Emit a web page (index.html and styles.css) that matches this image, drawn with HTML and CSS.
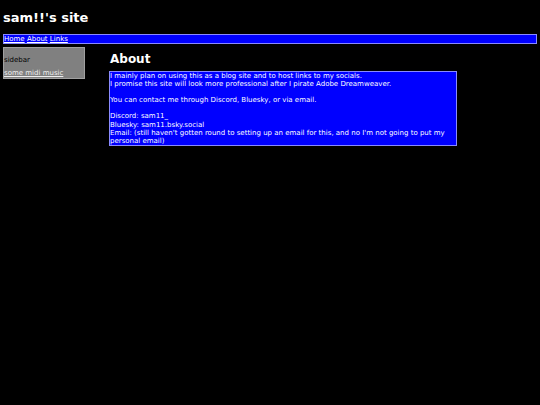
FILE: index.html
```html
<!DOCTYPE html>
<html>
<head>
<meta charset="utf-8">
<title>sam!!'s site</title>
<link rel="stylesheet" href="styles.css">
</head>
<body>
<h1 class="title">sam!!'s site</h1>
<div class="nav"><a href="#">Home</a> <a href="#">About</a> <a href="#">Links</a></div>
<div class="layout">
  <div class="sidebar">
    <p class="side-label">sidebar</p>
    <a href="#" class="side-link">some midi music</a>
  </div>
  <div class="main">
    <h2 class="heading">About</h2>
    <div class="box">
      I mainly plan on using this as a blog site and to host links to my socials.<br>
      I promise this site will look more professional after I pirate Adobe Dreamweaver.<br><br>
      You can contact me through Discord, Bluesky, or via email.<br><br>
      Discord: sam11_<br>
      Bluesky: sam11.bsky.social<br>
      Email: (still haven't gotten round to setting up an email for this, and no I'm not going to put my personal email)
    </div>
  </div>
</div>
</body>
</html>
```
FILE: styles.css
```css
html, body {
  background: #000;
}
body {
  margin: 3px;
  color: #fff;
  font-family: "DejaVu Sans", Verdana, sans-serif;
  font-size: 7px;
}
a {
  color: #fff;
}
.title {
  font-size: 13px;
  font-weight: bold;
  margin: 6px 0 7px 0;
  line-height: 18px;
}
.nav {
  background: #0000ff;
  border: 1px solid #8a8aff;
  height: 8px;
  line-height: 8px;
}
.layout {
  display: flex;
  align-items: flex-start;
  margin-top: 3px;
}
.sidebar {
  width: 80px;
  background: #808080;
  border: 1px solid #a0a0a0;
  padding: 0 0 1px 0;
}
.side-label {
  color: #000;
  margin: 8px 0 5px 0;
}
.side-link {
  color: #eee;
}
.main {
  margin-left: 24px;
}
.heading {
  font-size: 12px;
  font-weight: bold;
  margin: 5px 0 5px 1px;
}
.box {
  width: 346px;
  background: #0000ff;
  border: 1px solid #8a8aff;
  line-height: 8.1px;
}
```
